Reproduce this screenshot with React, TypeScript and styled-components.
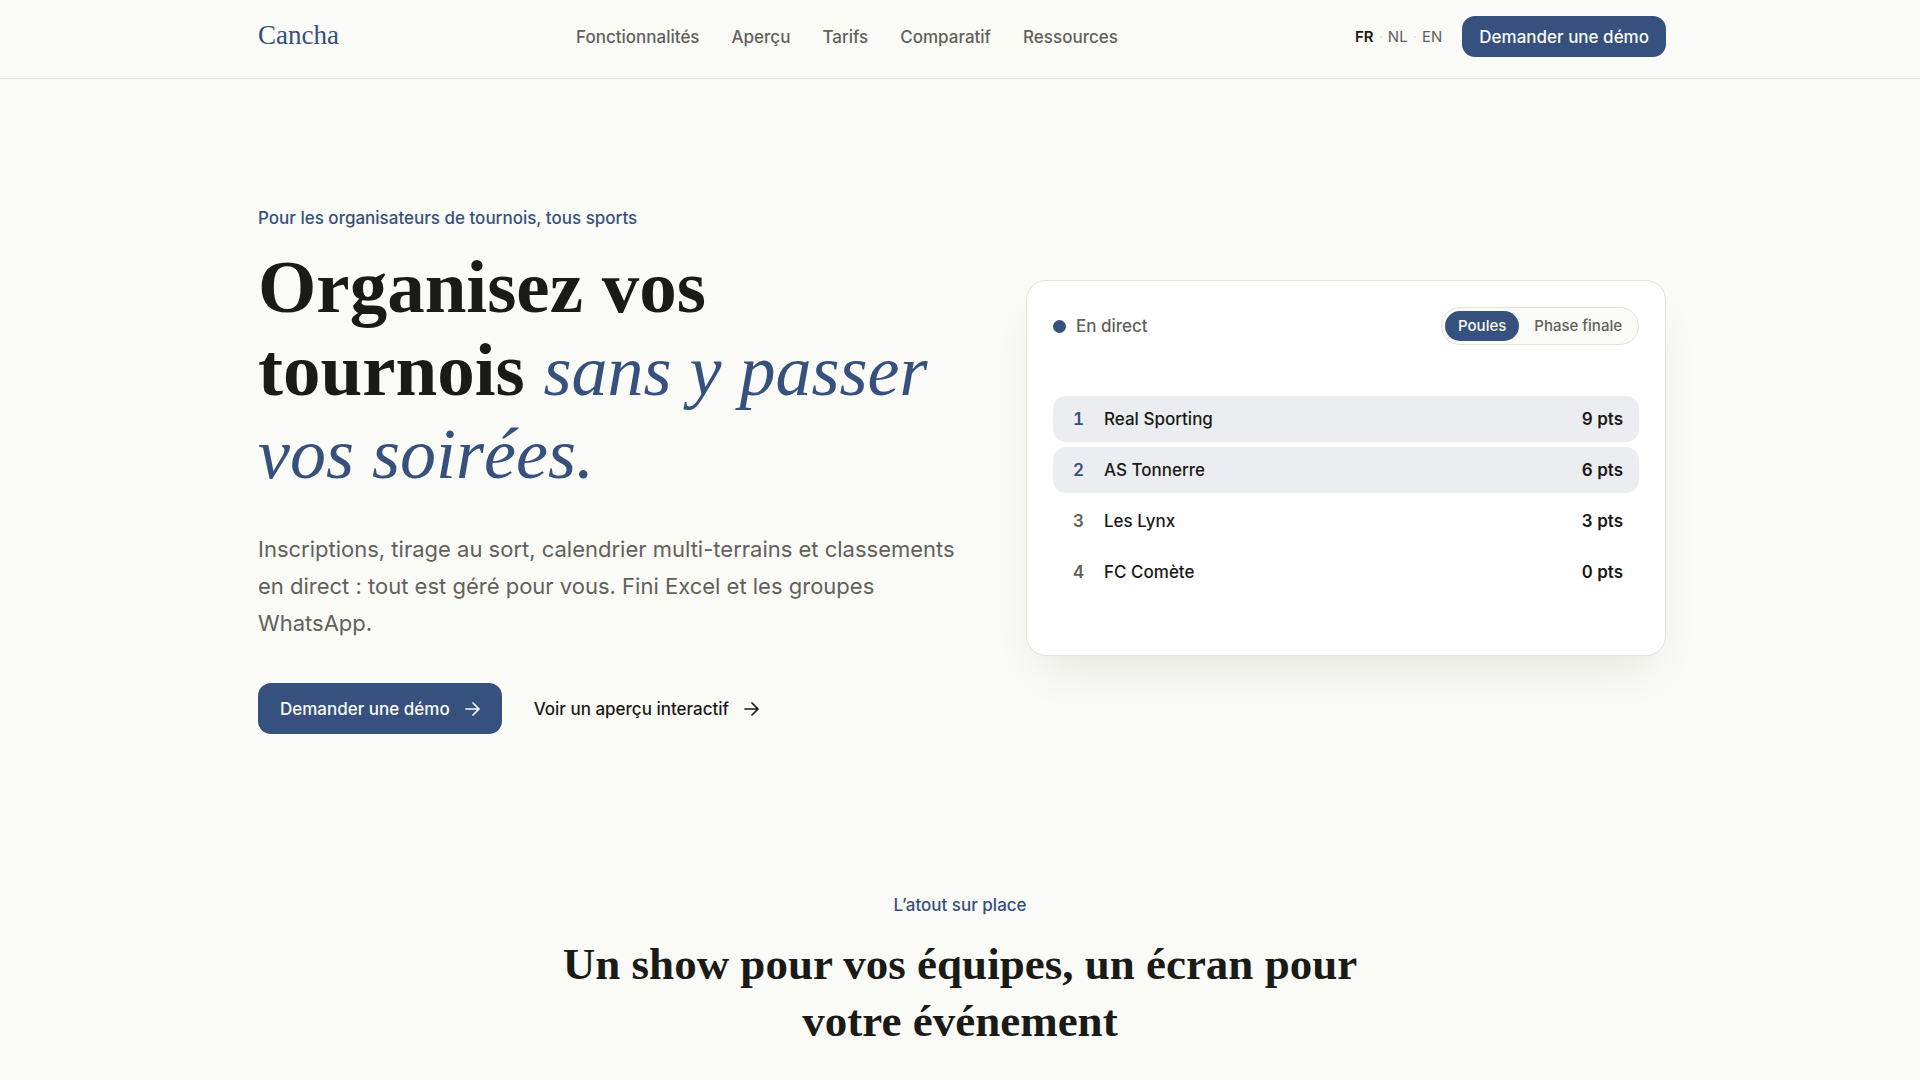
import React, { useState } from "react";
import styled, { createGlobalStyle, css } from "styled-components";

const ink = "#1a1a17";
const muted = "#62615b";
const blue = "#37517e";
const line = "#e3e2da";
const paper = "#fafaf6";
const sans = `Inter, "Liberation Sans", sans-serif`;
const serif = `"Liberation Serif", serif`;

const GlobalStyle = createGlobalStyle`
  *, *::before, *::after { box-sizing: border-box; }
  body {
    margin: 0;
    background: ${paper};
    color: ${ink};
    font-family: ${sans};
    -webkit-font-smoothing: antialiased;
  }
  h1, h2, p { margin: 0; }
  a { color: inherit; text-decoration: none; }
`;

const Page = styled.div`
  min-height: 100vh;
  overflow: hidden;
`;

const Header = styled.header`
  padding: 16px 24px 21px 28px;
  border-bottom: 1px solid ${line};
`;

const Bar = styled.div`
  display: flex;
  align-items: center;
  justify-content: space-between;
  max-width: 1408px;
  margin: 0 auto;
`;

const Logo = styled.a`
  padding-bottom: 4px;
  color: ${blue};
  font: 400 27px/30px ${serif};
`;

const Nav = styled.nav`
  display: flex;
  gap: 32px;
  color: ${muted};
  font-size: 17px;
  font-weight: 500;
  line-height: 24px;
`;

const Actions = styled.div`
  display: flex;
  align-items: center;
  gap: 20px;
`;

const Languages = styled.div`
  display: flex;
  align-items: center;
  gap: 5px;
  font-size: 15px;
  line-height: 24px;
  color: ${line};
`;

const Language = styled.a<{ $active?: boolean }>`
  color: ${(p) => (p.$active ? ink : muted)};
  font-weight: ${(p) => (p.$active ? 600 : 400)};
`;

const Button = styled.button<{ $large?: boolean }>`
  display: inline-flex;
  align-items: center;
  gap: 15px;
  height: ${(p) => (p.$large ? 51 : 41)}px;
  padding: 0 ${(p) => (p.$large ? 22 : 17)}px;
  border: 0;
  border-radius: 13px;
  background: ${blue};
  color: ${paper};
  font: 500 17px/24px ${sans};
  cursor: pointer;
`;

const Hero = styled.section`
  padding: 123px 24px 0 28px;
`;

const HeroGrid = styled.div`
  display: grid;
  grid-template-columns: 1.1fr 1fr;
  align-items: center;
  gap: 64px;
  max-width: 1408px;
  margin: 0 auto;

  @media (max-width: 1000px) {
    grid-template-columns: 1fr;
  }
`;

const Eyebrow = styled.p`
  color: ${blue};
  font-size: 17px;
  font-weight: 500;
  line-height: 32px;
`;

const Title = styled.h1`
  margin-top: 11px;
  font: 700 75px/83px ${serif};

  em {
    color: ${blue};
    font-size: 72px;
    font-weight: 400;
    line-height: 80px;
  }
`;

const Lead = styled.p`
  margin-top: 37px;
  color: ${muted};
  font-size: 22px;
  line-height: 37px;
`;

const Ctas = styled.div`
  display: flex;
  align-items: center;
  gap: 32px;
  margin-top: 41px;
`;

const TextLink = styled.a`
  display: inline-flex;
  align-items: center;
  gap: 15px;
  font-size: 17px;
  font-weight: 500;
  line-height: 24px;
`;

const Card = styled.section`
  padding: 26px;
  border: 1px solid ${line};
  border-radius: 20px;
  background: #fff;
  box-shadow: 0 24px 48px -16px rgba(26, 26, 23, 0.1);
`;

const CardHead = styled.div`
  display: flex;
  align-items: center;
  justify-content: space-between;
`;

const Live = styled.span`
  display: flex;
  align-items: center;
  gap: 10px;
  color: ${muted};
  font-size: 17px;
  font-weight: 500;
  line-height: 24px;

  &::before {
    content: "";
    width: 13px;
    height: 13px;
    border-radius: 50%;
    background: ${blue};
  }
`;

const Switch = styled.div`
  display: flex;
  gap: 2px;
  padding: 3px;
  border: 1px solid ${line};
  border-radius: 19px;
  background: ${paper};
`;

const SwitchTab = styled.button<{ $active: boolean }>`
  height: 30px;
  padding: 0 13px;
  border: 0;
  border-radius: 15px;
  background: transparent;
  color: ${muted};
  font: 500 15px/20px ${sans};
  cursor: pointer;
  ${(p) =>
    p.$active &&
    css`
      background: ${blue};
      color: ${paper};
    `}
`;

const Panel = styled.div`
  display: flex;
  align-items: center;
  min-height: 268px;
  margin-top: 16px;
`;

const Standings = styled.table`
  width: 100%;
  border-spacing: 0 5px;
  font-size: 17px;
  font-variant-numeric: tabular-nums;
  line-height: 24px;
`;

const Team = styled.tr<{ $qualified: boolean }>`
  height: 46px;
  background: ${(p) => (p.$qualified ? "#ecedf0" : "transparent")};

  td {
    padding: 0;
    font-weight: 500;
  }
  td:first-child {
    width: 51px;
    padding-left: 20px;
    border-radius: 13px 0 0 13px;
    color: ${(p) => (p.$qualified ? blue : muted)};
    font-weight: 600;
  }
  td:last-child {
    padding-right: 16px;
    border-radius: 0 13px 13px 0;
    font-weight: 600;
    text-align: right;
  }
`;

const Showcase = styled.section`
  padding: 155px 24px 24px;
  text-align: center;
`;

const Subtitle = styled.h2`
  max-width: 820px;
  margin: 15px auto 0;
  font: 700 45px/57px ${serif};
`;

const Arrow = () => (
  <svg width="15" height="16" viewBox="0 0 15 16" fill="none" stroke="currentColor" strokeWidth="1.7" strokeLinecap="round" strokeLinejoin="round" aria-hidden="true">
    <path d="M1 8h13M8 2l6 6-6 6" />
  </svg>
);

const links = ["Fonctionnalités", "Aperçu", "Tarifs", "Comparatif", "Ressources"];
const tabs = ["Poules", "Phase finale"];
const teams = [
  { name: "Real Sporting", points: 9 },
  { name: "AS Tonnerre", points: 6 },
  { name: "Les Lynx", points: 3 },
  { name: "FC Comète", points: 0 },
];

export default function App() {
  const [tab, setTab] = useState(tabs[0]);

  return (
    <Page>
      <GlobalStyle />
      <Header>
        <Bar>
          <Logo href="#">Cancha</Logo>
          <Nav>
            {links.map((label) => (
              <a href="#" key={label}>{label}</a>
            ))}
          </Nav>
          <Actions>
            <Languages>
              <Language href="#" $active>FR</Language>
              <span>·</span>
              <Language href="#">NL</Language>
              <span>·</span>
              <Language href="#">EN</Language>
            </Languages>
            <Button type="button">Demander une démo</Button>
          </Actions>
        </Bar>
      </Header>
      <main>
        <Hero>
          <HeroGrid>
            <div>
              <Eyebrow>Pour les organisateurs de tournois, tous sports</Eyebrow>
              <Title>
                Organisez vos tournois <em>sans y passer vos soirées.</em>
              </Title>
              <Lead>
                Inscriptions, tirage au sort, calendrier multi-terrains et classements en direct : tout est géré pour
                vous. Fini Excel et les groupes WhatsApp.
              </Lead>
              <Ctas>
                <Button type="button" $large>Demander une démo <Arrow /></Button>
                <TextLink href="#">Voir un aperçu interactif <Arrow /></TextLink>
              </Ctas>
            </div>
            <Card>
              <CardHead>
                <Live>En direct</Live>
                <Switch>
                  {tabs.map((label) => (
                    <SwitchTab type="button" key={label} $active={label === tab} onClick={() => setTab(label)}>
                      {label}
                    </SwitchTab>
                  ))}
                </Switch>
              </CardHead>
              <Panel>
                <Standings>
                  <tbody>
                    {teams.map((team, i) => (
                      <Team key={team.name} $qualified={i < 2}>
                        <td>{i + 1}</td>
                        <td>{team.name}</td>
                        <td>{team.points} pts</td>
                      </Team>
                    ))}
                  </tbody>
                </Standings>
              </Panel>
            </Card>
          </HeroGrid>
        </Hero>
        <Showcase>
          <Eyebrow>L’atout sur place</Eyebrow>
          <Subtitle>Un show pour vos équipes, un écran pour votre événement</Subtitle>
        </Showcase>
      </main>
    </Page>
  );
}
